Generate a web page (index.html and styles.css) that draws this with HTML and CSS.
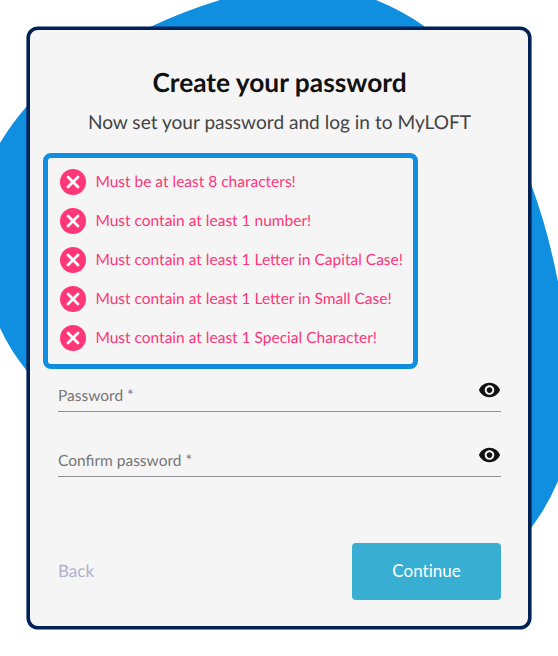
FILE: index.html
```html
<!DOCTYPE html>
<html lang="en">
<head>
    <meta charset="UTF-8">
    <title>Create your password</title>
    <link rel="stylesheet" href="styles.css">
</head>
<body>
    <svg class="blob" viewBox="0 0 558 656" aria-hidden="true">
        <path d="M0 143 Q12 123 27 106 L150 27 Q184 11 220 0 L376 0 Q403 11 424 26 L531 184 Q548 230 558 282 L558 481 Q547 507 531 528 L300 500 L27 371 Q10 350 0 328 Z"/>
    </svg>

    <!-- Shared icons -->
    <svg class="sprite" aria-hidden="true">
        <symbol id="icon-cross" viewBox="0 0 26 26">
            <circle cx="13" cy="13" r="13" fill="#ff3779"/>
            <path d="M8 8 18 18M18 8 8 18" fill="none" stroke="#fff" stroke-width="2.8" stroke-linecap="round"/>
        </symbol>
        <symbol id="icon-eye" viewBox="0 0 24 24">
            <path d="M12 4.5C7 4.5 2.73 7.61 1 12c1.73 4.39 6 7.5 11 7.5s9.27-3.11 11-7.5c-1.73-4.39-6-7.5-11-7.5zM12 17c-2.76 0-5-2.24-5-5s2.24-5 5-5 5 2.24 5 5-2.24 5-5 5zm0-8c-1.66 0-3 1.34-3 3s1.34 3 3 3 3-1.34 3-3-1.34-3-3-3z"/>
        </symbol>
    </svg>

    <form class="card">
        <h1 class="title">Create your password</h1>
        <p class="subtitle">Now set your password and log in to MyLOFT</p>

        <ul class="rules">
            <li class="rule"><svg class="rule-icon"><use href="#icon-cross"/></svg><span>Must be at least 8 characters!</span></li>
            <li class="rule"><svg class="rule-icon"><use href="#icon-cross"/></svg><span>Must contain at least 1 number!</span></li>
            <li class="rule"><svg class="rule-icon"><use href="#icon-cross"/></svg><span>Must contain at least 1 Letter in Capital Case!</span></li>
            <li class="rule"><svg class="rule-icon"><use href="#icon-cross"/></svg><span>Must contain at least 1 Letter in Small Case!</span></li>
            <li class="rule"><svg class="rule-icon"><use href="#icon-cross"/></svg><span>Must contain at least 1 Special Character!</span></li>
        </ul>

        <div class="field">
            <label class="label">Password *</label>
            <svg class="eye"><use href="#icon-eye"/></svg>
        </div>
        <div class="field">
            <label class="label">Confirm password *</label>
            <svg class="eye"><use href="#icon-eye"/></svg>
        </div>

        <div class="actions">
            <a class="back">Back</a>
            <button class="continue" type="button">Continue</button>
        </div>
    </form>
</body>
</html>
```
FILE: styles.css
```css
* {
    box-sizing: border-box;
}

body {
    margin: 0;
    height: 656px;
    padding: 27px;
    background: #fff;
    font-family: Lato, sans-serif;
    text-rendering: geometricPrecision;
    overflow: hidden;
}

/* Sits behind the card */
.blob {
    position: absolute;
    top: 0;
    left: 0;
    width: 558px;
    height: 656px;
    fill: #108ee0;
}

.sprite {
    display: none;
}

.card {
    position: relative;
    width: 504px;
    height: 602px;
    padding: 34px 27px 0 28px;
    background: #f5f5f5;
    border: 3px solid #002257;
    border-radius: 11px;
    box-shadow: 0 0 0 0.6px #002257;
}

.title {
    margin: 0;
    font-size: 26.3px;
    line-height: 36px;
    font-weight: 700;
    text-align: center;
    color: #111;
}

.subtitle {
    margin: 7px 0 0;
    font-size: 19.1px;
    line-height: 31px;
    text-align: center;
    white-space: nowrap;
    color: #444;
}

.rules {
    display: flex;
    flex-direction: column;
    gap: 13px;
    width: 375px;
    height: 216px;
    margin: 15px 0 0 -15px;
    padding: 11px 12.4px;
    list-style: none;
    border: 5px solid #108ee0;
    border-radius: 8px;
}

.rule {
    display: flex;
    align-items: center;
    height: 26px;
    gap: 9px;
    font-size: 15.5px;
    line-height: 24px;
    white-space: nowrap;
    color: #ff3779;
}

.rule span {
    padding-bottom: 1px;
}

.rule-icon {
    flex: none;
    width: 26px;
    height: 26px;
}

.field {
    display: flex;
    align-items: flex-start;
    justify-content: space-between;
    height: 34px;
    margin-top: 9px;
    border-bottom: 1px solid #8f8f8f;
}

.field + .field {
    margin-top: 31px;
}

.label {
    padding-top: 8px;
    font-size: 15.5px;
    line-height: 20px;
    color: #777;
}

.eye {
    width: 23px;
    height: 24px;
    fill: #111;
}

.actions {
    display: flex;
    align-items: center;
    justify-content: space-between;
    margin-top: 66px;
}

.back {
    padding-bottom: 2px;
    font-size: 17px;
    color: #b0b0cf;
}

.continue {
    width: 149px;
    height: 57px;
    padding: 0 0 2px;
    border: 0;
    border-radius: 4px;
    background: #39aed3;
    color: #fff;
    font-family: inherit;
    font-size: 17px;
    font-variant-ligatures: none;
}
```
